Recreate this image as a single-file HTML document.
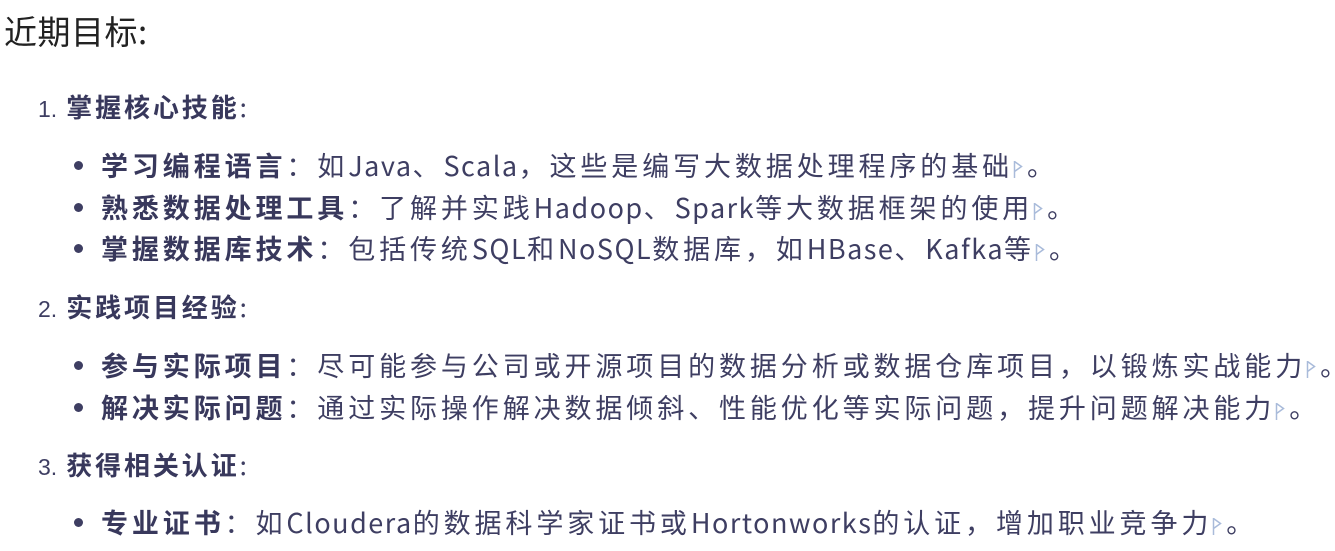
<!DOCTYPE html>
<html><head><meta charset="utf-8"><style>
body{margin:0;width:1335px;height:551px;background:#fff;position:relative;overflow:hidden;font-family:"Noto Sans CJK SC","Liberation Sans",sans-serif;}
.l{position:absolute;white-space:nowrap;line-height:40px;height:40px;font-size:27px;letter-spacing:3.9px;color:#3e3e62;}
.h{left:4px;top:10px;font-size:33px;letter-spacing:0.5px;color:#222;}
.n{left:38px;font-size:26px;letter-spacing:2.9px}
.n span.d{letter-spacing:0;margin-right:9px;font-size:23px;font-family:"Liberation Sans",sans-serif}
.b{left:101px}
.b::before{content:"";position:absolute;left:-27px;top:16px;width:9px;height:9px;border-radius:50%;background:#3e3e62;}
strong{font-weight:bold;color:#38385c}
i{font-style:normal;letter-spacing:1.5px}
svg{vertical-align:-3px;margin:0 4px 0 0}
</style></head><body>
<div class="l h">近期目标:</div>
<div class="l n" style="top:87px"><span class="d">1.</span><strong>掌握核心技能</strong>:</div>
<div class="l b" style="top:145px"><strong>学习编程语言</strong>：如<i>Java</i>、<i>Scala</i>，这些是编写大数据处理程序的基础<svg width="10" height="20" viewBox="0 0 10 20"><path d="M1.5 2V19M1.5 2.5L8.5 7.5L1.5 12.5" fill="none" stroke="#a9bbda" stroke-width="1.5"/></svg>。</div>
<div class="l b" style="top:187px"><strong>熟悉数据处理工具</strong>：了解并实践<i>Hadoop</i>、<i>Spark</i>等大数据框架的使用<svg width="10" height="20" viewBox="0 0 10 20"><path d="M1.5 2V19M1.5 2.5L8.5 7.5L1.5 12.5" fill="none" stroke="#a9bbda" stroke-width="1.5"/></svg>。</div>
<div class="l b" style="top:228px"><strong>掌握数据库技术</strong>：包括传统<i>SQL</i>和<i>NoSQL</i>数据库，如<i>HBase</i>、<i>Kafka</i>等<svg width="10" height="20" viewBox="0 0 10 20"><path d="M1.5 2V19M1.5 2.5L8.5 7.5L1.5 12.5" fill="none" stroke="#a9bbda" stroke-width="1.5"/></svg>。</div>
<div class="l n" style="top:287px"><span class="d">2.</span><strong>实践项目经验</strong>:</div>
<div class="l b" style="top:345px"><strong>参与实际项目</strong>：尽可能参与公司或开源项目的数据分析或数据仓库项目，以锻炼实战能力<svg width="10" height="20" viewBox="0 0 10 20"><path d="M1.5 2V19M1.5 2.5L8.5 7.5L1.5 12.5" fill="none" stroke="#a9bbda" stroke-width="1.5"/></svg>。</div>
<div class="l b" style="top:387px"><strong>解决实际问题</strong>：通过实际操作解决数据倾斜、性能优化等实际问题，提升问题解决能力<svg width="10" height="20" viewBox="0 0 10 20"><path d="M1.5 2V19M1.5 2.5L8.5 7.5L1.5 12.5" fill="none" stroke="#a9bbda" stroke-width="1.5"/></svg>。</div>
<div class="l n" style="top:445px"><span class="d">3.</span><strong>获得相关认证</strong>:</div>
<div class="l b" style="top:502px"><strong>专业证书</strong>：如<i>Cloudera</i>的数据科学家证书或<i>Hortonworks</i>的认证，增加职业竞争力<svg width="10" height="20" viewBox="0 0 10 20"><path d="M1.5 2V19M1.5 2.5L8.5 7.5L1.5 12.5" fill="none" stroke="#a9bbda" stroke-width="1.5"/></svg>。</div>
</body></html>
